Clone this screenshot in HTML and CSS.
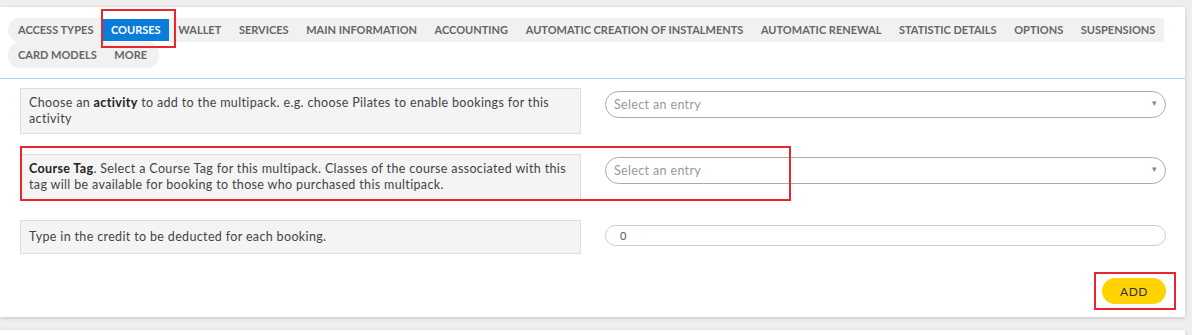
FILE: index.html
```html
<!DOCTYPE html>
<html lang="en">
<head>
    <meta charset="UTF-8">
    <title>Multipack - Courses</title>
    <link rel="stylesheet" href="styles.css">
</head>
<body>

<div class="card">
    <div class="tabs">
        <ul class="tab-list">
            <li>Access types</li>
            <li class="active">Courses</li>
            <li>Wallet</li>
            <li>Services</li>
            <li>Main information</li>
            <li>Accounting</li>
            <li>Automatic creation of instalments</li>
            <li>Automatic renewal</li>
            <li>Statistic details</li>
            <li>Options</li>
            <li>Suspensions</li>
            <li>Card models</li>
            <li>More</li>
        </ul>
    </div>

    <form class="form">
        <div class="row">
            <div class="label"><p>Choose an <b>activity</b> to add to the multipack. e.g. choose Pilates to enable bookings for this activity</p></div>
            <div class="select">
                <span>Select an entry</span>
                <span class="arrow">&#9662;</span>
            </div>
        </div>
        <div class="row">
            <div class="label"><p><b>Course Tag</b>. Select a Course Tag for this multipack. Classes of the course associated with this tag will be available for booking to those who purchased this multipack.</p></div>
            <div class="select">
                <span>Select an entry</span>
                <span class="arrow">&#9662;</span>
            </div>
        </div>
        <div class="row">
            <div class="label"><p>Type in the credit to be deducted for each booking.</p></div>
            <input class="text-input" type="text" value="0">
        </div>
        <div class="actions">
            <button type="button" class="btn-add">ADD</button>
        </div>
    </form>

    <!-- annotation boxes -->
    <div class="mark mark-tab"></div>
    <div class="mark mark-tag"></div>
    <div class="mark mark-add"></div>
</div>

<div class="card card-next"></div>

</body>
</html>
```

FILE: styles.css
```css
body {
    margin: 0;
    padding-top: 7px;
    background: #efefef;
    font-family: 'Lato', 'Liberation Sans', sans-serif;
    color: #444;
    overflow: hidden;
}

.card {
    position: relative;
    width: 1185px;
    background: #fff;
    box-shadow: 0 1px 4px rgba(0, 0, 0, 0.18);
    padding-bottom: 13px;
}

.card-next {
    margin-top: 13px;
    height: 40px;
    padding: 0;
}

/* tabs */
.tabs {
    padding: 11px 0 10px 8px;
    border-bottom: 1px solid #a8d3f4;
}

.tab-list {
    list-style: none;
    margin: 0;
    padding: 0;
    display: flex;
    flex-wrap: wrap;
}

.tab-list li {
    background: #f1f1f1;
    color: #666;
    font-size: 11px;
    font-weight: 700;
    text-transform: uppercase;
    height: 24px;
    line-height: 24px;
    padding: 0 8.8px;
    white-space: nowrap;
}

.tab-list li:first-child,
.tab-list li:nth-child(12) {
    padding-left: 10px;
    border-radius: 12px 0 0 12px;
}

.tab-list li:nth-child(11) {
    padding-right: 9px;
}

.tab-list li:nth-child(12),
.tab-list li:last-child {
    height: 26px;
    line-height: 26px;
}

.tab-list li:last-child {
    border-radius: 0 12px 12px 0;
    padding-right: 12px;
}

.tab-list li.active {
    background: #0a7ddb;
    color: #fff;
    height: 22px;
    line-height: 22px;
    margin-top: 1px;
    margin-bottom: 1px;
}

/* form */
.form {
    padding: 9px 19px 0 20px;
}

.row {
    display: grid;
    grid-template-columns: 561px 1fr;
    column-gap: 24px;
    align-items: start;
    margin-bottom: 20px;
}

.label {
    background: #f4f4f4;
    border: 1px solid #ddd;
    padding: 6px 9px 6px 8px;
    min-height: 20px;
    display: flex;
    align-items: center;
}

.label p {
    margin: 0;
    font-size: 12.5px;
    letter-spacing: 0.35px;
    line-height: 16px;
}

.label b {
    color: #222;
}

.select {
    margin-top: 3px;
    height: 25px;
    border: 1px solid #aaa;
    border-radius: 14px;
    display: flex;
    align-items: center;
    justify-content: space-between;
    padding: 0 8px 0 8px;
    font-size: 12.5px;
    letter-spacing: 0.35px;
    color: #999;
}

.select .arrow {
    font-size: 9px;
    color: #888;
    margin-top: -4px;
}

.text-input {
    margin-top: 5px;
    height: 21px;
    box-sizing: border-box;
    border: 1px solid #ccc;
    border-radius: 11px;
    padding: 0 14px;
    font-family: inherit;
    font-size: 11px;
    color: #555;
    outline: none;
}

.actions {
    display: flex;
    justify-content: flex-end;
    padding-top: 4px;
}

.btn-add {
    width: 64px;
    height: 26px;
    border: none;
    border-radius: 13px;
    background: #ffd200;
    color: #333;
    font-family: inherit;
    font-size: 12px;
    letter-spacing: 0.6px;
}

/* annotation boxes */
.mark {
    position: absolute;
    border: 2px solid #e8262d;
}

.mark-tab {
    left: 101px;
    top: 2px;
    width: 71px;
    height: 35px;
}

.mark-tag {
    left: 20px;
    top: 139px;
    width: 767px;
    height: 51px;
}

.mark-add {
    left: 1094px;
    top: 265px;
    width: 78px;
    height: 34px;
}
```
